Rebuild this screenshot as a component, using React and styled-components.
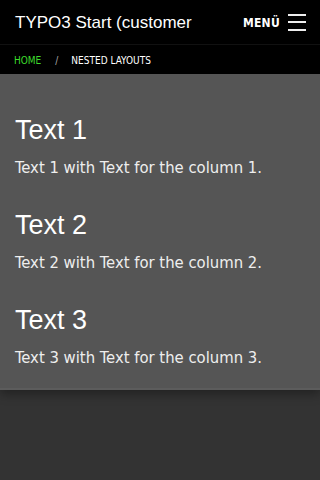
import React from "react";
import styled, { createGlobalStyle } from "styled-components";

const GlobalStyle = createGlobalStyle`
  html, body {
    margin: 0;
    padding: 0;
    background: #333;
  }
  body {
    font-family: "DejaVu Sans", sans-serif;
  }
`;

const columns = [
  { id: 1, title: "Text 1", text: "Text 1 with Text for the column 1." },
  { id: 2, title: "Text 2", text: "Text 2 with Text for the column 2." },
  { id: 3, title: "Text 3", text: "Text 3 with Text for the column 3." },
];

const App = () => {
  return (
    <Page>
      <GlobalStyle />
      <Header>
        <Brand>TYPO3 Start (customer</Brand>
        <MenuToggle>
          <MenuLabel>MENÜ</MenuLabel>
          <Burger>
            <span />
            <span />
            <span />
          </Burger>
        </MenuToggle>
      </Header>
      <Breadcrumb>
        <Crumb $active>HOME</Crumb>
        <Separator>/</Separator>
        <Crumb>NESTED LAYOUTS</Crumb>
      </Breadcrumb>
      <Main>
        {columns.map((col) => (
          <Column key={col.id}>
            <Heading>{col.title}</Heading>
            <Body>{col.text}</Body>
          </Column>
        ))}
      </Main>
    </Page>
  );
};

const Page = styled.div`
  min-height: 480px;
  background: #333;
`;

const Header = styled.header`
  display: flex;
  align-items: center;
  justify-content: space-between;
  height: 45px;
  padding: 0 14px 0 15px;
  background: #000;
  border-bottom: 1px solid #111;
  box-sizing: border-box;
`;

const Brand = styled.div`
  font-family: "Liberation Sans", Arial, sans-serif;
  font-size: 17px;
  color: #fff;
  white-space: nowrap;
  padding-top: 2px;
`;

const MenuToggle = styled.div`
  display: flex;
  align-items: center;
  gap: 8px;
`;

const MenuLabel = styled.span`
  font-family: "DejaVu Sans Condensed", "DejaVu Sans", sans-serif;
  font-weight: bold;
  font-size: 12px;
  color: #fff;
  letter-spacing: 0.3px;
  padding-top: 2px;
`;

const Burger = styled.div`
  display: flex;
  flex-direction: column;
  gap: 5.5px;
  width: 18px;

  span {
    display: block;
    height: 2px;
    background: #eee;
  }
`;

const Breadcrumb = styled.nav`
  display: flex;
  align-items: center;
  height: 28px;
  padding: 1px 14px 0;
  background: #000;
  font-family: "DejaVu Sans Condensed", "DejaVu Sans", sans-serif;
  font-size: 10px;
`;

const Crumb = styled.span`
  color: ${(p) => (p.$active ? "#3ddc2c" : "#fff")};
`;

const Separator = styled.span`
  color: #aaa;
  margin: 0 13px 0 14px;
`;

const Main = styled.main`
  background: #555;
  padding: 36px 15px 18px;
  box-shadow: 0 4px 10px rgba(0, 0, 0, 0.35);
  border-bottom: 2px solid #5c5c5c;
`;

const Column = styled.section`
  margin-bottom: 25px;

  &:last-child {
    margin-bottom: 0;
  }
`;

const Heading = styled.h2`
  margin: 0 0 6px;
  font-family: "Liberation Sans", Arial, sans-serif;
  font-weight: normal;
  font-size: 27px;
  line-height: 40px;
  color: #fff;
`;

const Body = styled.p`
  margin: 0;
  font-family: "DejaVu Sans Condensed", "DejaVu Sans", sans-serif;
  font-size: 16.5px;
  line-height: 24px;
  color: #eee;
`;

export default App;
